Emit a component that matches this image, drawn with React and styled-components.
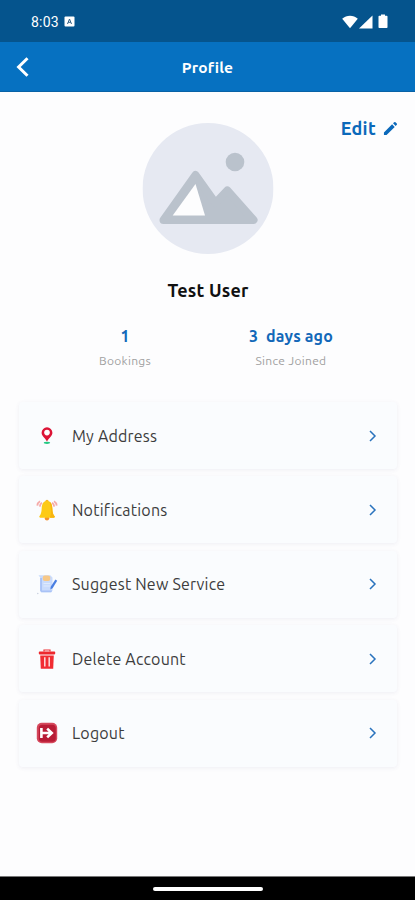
import React from 'react'
import styled, { createGlobalStyle } from 'styled-components'

const GlobalStyle = createGlobalStyle`
    *{
        box-sizing:border-box;
    }
    body{
        margin:0;
        background-color:#fdfdfe;
        font-family:Ubuntu, 'Noto Sans', sans-serif;
    }
`

const Screen = styled.div`
    height:900px;
    display:flex;
    flex-direction:column;
    overflow:hidden;
    background-color:#fdfdfe;
`

const StatusBar = styled.div`
    height:42px;
    padding:1px 27px 0 31px;
    display:flex;
    align-items:center;
    background-color:#05548d;
    color:#fff;
`

const Clock = styled.span`
    width:33px;
    font-family:Roboto, sans-serif;
    font-size:14px;
    letter-spacing:0.2px;
`

const StatusIcons = styled.div`
    margin-left:auto;
    display:flex;
    align-items:center;
    gap:1px;
`

const Header = styled.header`
    height:50px;
    padding:1px 16px 0;
    display:grid;
    grid-template-columns:40px 1fr 40px;
    align-items:center;
    background-color:#0671c1;
    border-bottom:1px solid #0862a6;
    color:#fff;
`

const BackButton = styled.button`
    display:flex;
    padding:0;
    border:0;
    background:none;
    color:inherit;
`

const Title = styled.h1`
    margin:0;
    text-align:center;
    font-size:15.5px;
    font-weight:600;
    letter-spacing:0.2px;
`

const Content = styled.main`
    flex:1;
    padding:22px 18px 0 19px;
`

const EditButton = styled.button`
    height:28px;
    margin:0 -1px -19px auto;
    padding:0;
    display:flex;
    align-items:center;
    gap:7px;
    border:0;
    background:none;
    color:#0b69ba;
    font-family:inherit;
    font-size:18px;
    font-weight:600;
    letter-spacing:0.3px;
`

const Avatar = styled.svg`
    display:block;
    width:131px;
    height:131px;
    margin:0 auto;
    transform:translateX(-0.5px);
`

const UserName = styled.h2`
    margin:24px 0 0;
    text-align:center;
    color:#111;
    font-size:18px;
    line-height:24px;
    font-weight:600;
    letter-spacing:0.2px;
`

const Stats = styled.div`
    display:grid;
    grid-template-columns:1fr 1fr;
    width:332px;
    margin:23px auto 0;
`

const Stat = styled.div`
    text-align:center;
    white-space:pre;
`

const StatValue = styled.div`
    color:#1268b9;
    font-size:16px;
    line-height:22px;
    font-weight:600;
    letter-spacing:0.15px;
`

const StatLabel = styled.div`
    margin-top:6px;
    color:#a0a0a0;
    font-size:12px;
    line-height:16px;
    letter-spacing:0.3px;
`

const Menu = styled.nav`
    display:flex;
    flex-direction:column;
    gap:7.4px;
    margin-top:33px;
`

const MenuItem = styled.a`
    height:67px;
    padding:0 19.5px 0 17px;
    display:flex;
    align-items:center;
    border-radius:4px;
    background-color:#fafcfe;
    box-shadow:0 1px 4px rgb(60,70,120,0.08);
    color:#3d3d3d;
    svg{
        flex:none;
    }
`

const MenuLabel = styled.span`
    flex:1;
    margin-left:14px;
    font-size:16px;
    letter-spacing:0.2px;
`

const NavigationBar = styled.div`
    height:24px;
    display:flex;
    align-items:center;
    justify-content:center;
    background-color:#000;
    border-top:1px solid #777;
`

const HomeHandle = styled.div`
    width:110px;
    height:4px;
    border-radius:2px;
    background-color:#fff;
`

const PinIcon = () => (
    <svg width="22" height="22" viewBox="0 0 22 22">
        <ellipse cx="11" cy="17.8" rx="3.2" ry="1.1" fill="#24c983" />
        <path d="M11 2.3a5.4 5.4 0 0 0-5.4 5.4c0 3.2 3.5 5 5.4 8.9 1.9-3.9 5.4-5.7 5.4-8.9A5.4 5.4 0 0 0 11 2.3z" fill="#dc1436" />
        <circle cx="11" cy="7.6" r="2.8" fill="#fff" />
    </svg>
)

const BellIcon = () => (
    <svg width="22" height="22" viewBox="0 0 22 22">
        <path d="M4 2.2Q1.4 3.8 1.3 6.6M6 3.8Q4 5 3.8 7.6M18 2.2q2.6 1.6 2.7 4.4M16 3.8Q18 5 18.2 7.6" fill="none" stroke="#f5aaa8" strokeWidth="1.8" />
        <circle cx="11" cy="19.2" r="2.2" fill="#f6912b" />
        <circle cx="11" cy="2.5" r="1.7" fill="#f8b521" />
        <path d="M11 2C7.5 2 5.9 4.8 5.7 9c-.2 4.5-.8 6.2-2.2 8.1-.6.8-.2 1.7.8 1.7h13.4c1 0 1.4-.9.8-1.7-1.4-1.9-2-3.6-2.2-8.1C16.1 4.8 14.5 2 11 2z" fill="#fdca16" />
        <path d="M13.6 2.8c1.8 1.2 2.6 3.4 2.7 6.2.2 4.5.8 6.2 2.2 8.1.6.8.2 1.7-.8 1.7h-3.8c1.4-4 1.4-10-.3-16z" fill="#f8b50f" />
    </svg>
)

const NoteIcon = () => (
    <svg width="22" height="22" viewBox="0 0 22 22">
        <path d="M2.5 2.2h11.7l2.3 2.3v12.8l-1.3 2H5.2l-1-1.6V4.5z" fill="#c9dbfc" />
        <path d="M4.2 5h1.7v14.3h-.7l-1-1.6z" fill="#a5c0f6" />
        <path d="M5.4 17.6h10.9l-1.1 1.7h-9z" fill="#a9c2f6" />
        <rect x="6.8" y="2.6" width="7.4" height="5.4" rx="2" fill="#f7c887" />
        <path d="M7.5 10.5h6.8M7.5 13h6.8" stroke="#dfeafd" strokeWidth="1" />
        <path d="M19.4 6.6l1.8 1.2-4.6 7.4-2.3 1.3.4-2.7z" fill="#4a7fe2" />
        <circle cx="1.8" cy="20.5" r=".7" fill="#c5ccdc" />
    </svg>
)

const TrashIcon = () => (
    <svg width="22" height="22" viewBox="0 0 22 22">
        <path d="M8 3.4V2h6v1.4" fill="none" stroke="#ed3035" strokeWidth="1.2" />
        <rect x="2.8" y="3.6" width="16.4" height="2.8" rx=".8" fill="#ed272d" />
        <path d="M4.2 7.4h13.6l-.6 13.4H4.8z" fill="#f12c32" />
        <path d="M8.8 9.2v9.4M13.2 9.2v9.4" stroke="#fcdcdd" strokeWidth="1.5" />
    </svg>
)

const LogoutIcon = () => (
    <svg width="22" height="22" viewBox="0 0 22 22">
        <rect x=".8" y=".8" width="20.4" height="20.4" rx="5" fill="#d5485c" />
        <rect x="2.8" y="2.8" width="17" height="17" rx="3.5" fill="#b81c36" />
        <path d="M5.4 6v10M5.4 11h10.4M11.2 6.6l4.6 4.4-4.6 4.4" fill="none" stroke="#fff" strokeWidth="2.6" />
    </svg>
)

const Chevron = () => (
    <svg width="10" height="14" viewBox="0 0 10 14">
        <path d="M2 2l5 5-5 5" fill="none" stroke="#2a73bd" strokeWidth="1.5" />
    </svg>
)

const menuItems = [
    { label: 'My Address', icon: PinIcon },
    { label: 'Notifications', icon: BellIcon },
    { label: 'Suggest New Service', icon: NoteIcon },
    { label: 'Delete Account', icon: TrashIcon },
    { label: 'Logout', icon: LogoutIcon },
]

const App = () => {
    return (
        <>
            <GlobalStyle />
            <Screen>
                <StatusBar>
                    <Clock>8:03</Clock>
                    <svg width="11" height="11" viewBox="0 0 11 11">
                        <rect x=".5" y=".5" width="10" height="10" rx="1" fill="#fff" />
                        <path d="M3.5 8l2-5 2 5M4.2 6.3h2.6" fill="none" stroke="#315f84" strokeWidth="1" />
                    </svg>
                    <StatusIcons>
                        <svg width="16" height="14" viewBox="0 0 16 14">
                            <path d="M.2 3.8C4.5-.3 11.5-.3 15.8 3.8L8 13.2z" fill="#fff" />
                        </svg>
                        <svg width="14" height="14" viewBox="0 0 14 14">
                            <path d="M13.5.5v13H0z" fill="#fff" />
                        </svg>
                        <svg width="14" height="15" viewBox="0 0 14 15">
                            <path d="M7 1.8V.5h4v1.3h1.7q.8 0 .8.8v10.6q0 .8-.8.8H5.3q-.8 0-.8-.8V2.6q0-.8.8-.8z" fill="#fff" />
                        </svg>
                    </StatusIcons>
                </StatusBar>
                <Header>
                    <BackButton aria-label="Back">
                        <svg width="14" height="20" viewBox="0 0 14 20">
                            <path d="M11.5 1.2L2.6 10l8.9 8.8" fill="none" stroke="#fff" strokeWidth="3" />
                        </svg>
                    </BackButton>
                    <Title>Profile</Title>
                </Header>
                <Content>
                    <EditButton>
                        Edit
                        <svg width="15" height="15" viewBox="0 0 16 16">
                            <path d="M1 12.2l8.7-8.7 2.8 2.8L3.8 15H1zM10.7 2.5l1.2-1.2q.7-.7 1.4 0l1.4 1.4q.7.7 0 1.4l-1.2 1.2z" fill="#0b69ba" />
                        </svg>
                    </EditButton>
                    <Avatar viewBox="0 0 131 131">
                        <circle cx="65.5" cy="65.5" r="65.5" fill="#e6e9f2" />
                        <circle cx="92.5" cy="39" r="9.3" fill="#bac2cc" />
                        <path d="M21 97L53 52l20 28 11.8-12.5L111 97z" fill="#bac2cc" stroke="#bac2cc" strokeWidth="8" strokeLinejoin="round" />
                        <path d="M53 61L30.2 92.5h32.3z" fill="#fdfdfe" />
                    </Avatar>
                    <UserName>Test User</UserName>
                    <Stats>
                        <Stat>
                            <StatValue>1</StatValue>
                            <StatLabel>Bookings</StatLabel>
                        </Stat>
                        <Stat>
                            <StatValue>3  days ago</StatValue>
                            <StatLabel>Since Joined</StatLabel>
                        </Stat>
                    </Stats>
                    <Menu>
                        {menuItems.map(({ label, icon: Icon }) => (
                            <MenuItem key={label}>
                                <Icon />
                                <MenuLabel>{label}</MenuLabel>
                                <Chevron />
                            </MenuItem>
                        ))}
                    </Menu>
                </Content>
                <NavigationBar>
                    <HomeHandle />
                </NavigationBar>
            </Screen>
        </>
    )
}

export default App
